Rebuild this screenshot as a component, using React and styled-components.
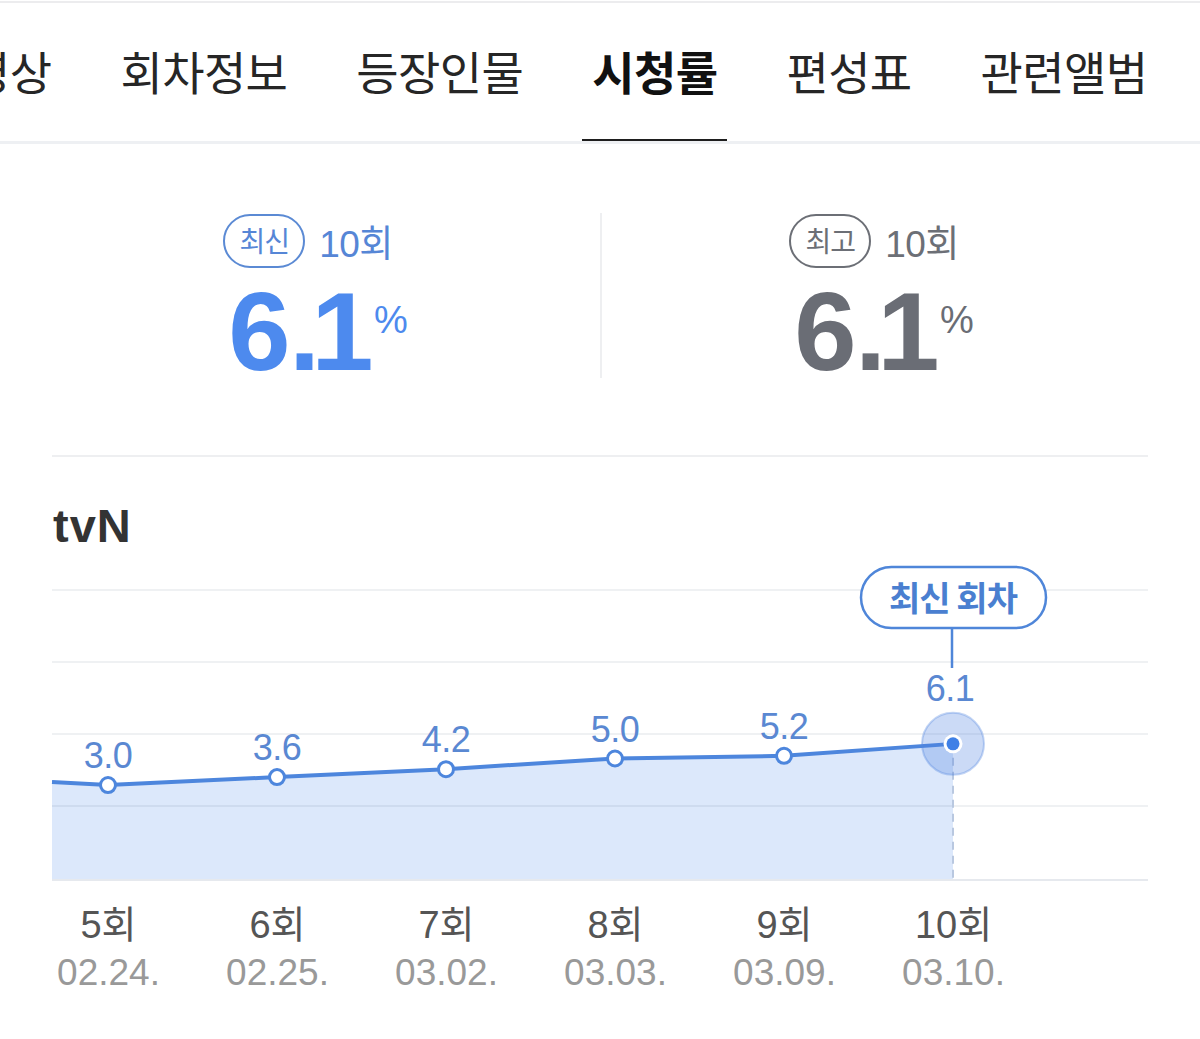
import React from 'react';
import styled, { createGlobalStyle } from 'styled-components';

const Global = createGlobalStyle`
  html, body {
    margin: 0;
    padding: 0;
    background: #fff;
  }
  body {
    font-family: "Liberation Sans", "Noto Sans CJK KR", sans-serif;
    color: #222;
  }
`;

const Page = styled.div`
  width: 1200px;
  height: 1039px;
  overflow: hidden;
  background: #fff;
`;

const TabBar = styled.nav`
  height: 138px;
  margin-top: 1px;
  border-top: 2px solid #ececee;
  border-bottom: 3px solid #eef0f3;
  overflow: hidden;
`;

const TabRow = styled.ul`
  display: flex;
  gap: 49px;
  height: 100%;
  margin: 0 0 0 -42px;
  padding: 0;
  list-style: none;
`;

const Tab = styled.li`
  position: relative;
  display: flex;
  align-items: center;
  padding: 0 10px 4px;
  flex-shrink: 0;
  font-family: "Noto Sans CJK KR", sans-serif;
  font-size: 46px;
  letter-spacing: -0.6px;
  font-weight: ${p => (p.$active ? 700 : 400)};
  color: ${p => (p.$active ? '#111' : '#262626')};
  &::after {
    content: '';
    display: ${p => (p.$active ? 'block' : 'none')};
    position: absolute;
    left: 0;
    right: 0;
    bottom: -1px;
    height: 3px;
    background: #1e1e1e;
  }
`;

const Stats = styled.section`
  display: grid;
  grid-template-columns: 584px 2px 1fr;
  padding: 69px 54px 0 16px;
`;

const StatCol = styled.div`
  display: flex;
  flex-direction: column;
  align-items: center;
  padding-top: 1px;
`;

const Divider = styled.div`
  width: 2px;
  height: 165px;
  background: #eeeff1;
`;

const BadgeRow = styled.div`
  display: flex;
  align-items: center;
  gap: 14px;
`;

const tone = {
  blue: { line: '#5b8ad4', text: '#5686d6', big: '#4d8aee' },
  gray: { line: '#6c6f76', text: '#6c6f76', big: '#6a6d75' },
};

const Badge = styled.span`
  box-sizing: border-box;
  display: inline-flex;
  align-items: center;
  justify-content: center;
  width: 82px;
  height: 54px;
  border: 2px solid ${p => tone[p.$tone].line};
  border-radius: 27px;
  font-family: "Noto Sans CJK KR", sans-serif;
  font-size: 28px;
  letter-spacing: -1px;
  color: ${p => tone[p.$tone].text};
  padding-bottom: 2px;
`;

const Ep = styled.span`
  font-size: 37px;
  letter-spacing: -0.5px;
  color: ${p => tone[p.$tone].text};
`;

const BigRow = styled.div`
  display: flex;
  align-items: flex-start;
  margin-top: 8px;
  padding-left: 20px;
  color: ${p => tone[p.$tone].big};
`;

const BigNum = styled.span`
  font-size: 112px;
  line-height: 1;
  font-weight: 700;
  letter-spacing: -1.5px;
`;

const Dot = styled.span`
  letter-spacing: -9px;
`;

const Pct = styled.span`
  font-size: 38px;
  line-height: 1;
  margin: 25px 0 0 2px;
`;

const ChartSection = styled.section`
  padding: 0 52px;
`;

const Rule = styled.div`
  height: 2px;
  margin-top: 67px;
  background: #eeeff1;
`;

const Channel = styled.h2`
  margin: 45px 0 0 1px;
  font-size: 47px;
  line-height: 1;
  font-weight: 700;
  letter-spacing: 1px;
  color: #333;
`;

const ChartSvg = styled.svg`
  display: block;
  margin-top: 12px;
  overflow: visible;
`;

const Axis = styled.div`
  display: grid;
  grid-template-columns: repeat(6, 169px);
  margin: 19px 0 0 -28px;
`;

const Tick = styled.div`
  display: flex;
  flex-direction: column;
  align-items: center;
  line-height: 1.25;
`;

const TickEp = styled.span`
  font-size: 38px;
  color: #555;
`;

const TickDate = styled.span`
  font-size: 37px;
  color: #999;
`;

const tabs = ['영상', '회차정보', '등장인물', '시청률', '편성표', '관련앨범'];

const episodes = [
  { ep: '5회', date: '02.24.', v: 3.0 },
  { ep: '6회', date: '02.25.', v: 3.6 },
  { ep: '7회', date: '03.02.', v: 4.2 },
  { ep: '8회', date: '03.03.', v: 5.0 },
  { ep: '9회', date: '03.09.', v: 5.2 },
  { ep: '10회', date: '03.10.', v: 6.1 },
];

const BLUE = '#4d86dd';
const px = i => 108 + i * 169;
const py = v => 824 - v * 13.3;

function Chart() {
  const pts = episodes.map((e, i) => [px(i), py(e.v)]);
  const line = [[52, 781], ...pts].map(p => p.join(',')).join(' ');
  const area = `M52,878 L${line.replace(/ /g, ' L')} L953,878 Z`;
  const last = pts[pts.length - 1];

  return (
    <ChartSvg width="1096" height="322" viewBox="52 560 1096 322">
      <path d={area} fill="#dce8fb" />
      {[589, 661, 733, 805].map(y => (
        <line key={y} x1="52" x2="1148" y1={y} y2={y} stroke="rgba(30,50,90,0.07)" strokeWidth="2" />
      ))}
      <line x1="52" x2="1148" y1="879" y2="879" stroke="#e6e9ee" strokeWidth="2" />
      <line x1={last[0]} x2={last[0]} y1={last[1]} y2="878" stroke="#b9c8e0" strokeWidth="2" strokeDasharray="8 6" />
      <polyline points={line} fill="none" stroke={BLUE} strokeWidth="4" strokeLinejoin="round" />
      {pts.slice(0, -1).map(([x, y], i) => (
        <g key={i}>
          <circle cx={x} cy={y} r="7.5" fill="#fff" stroke={BLUE} strokeWidth="3" />
          <text x={x} y={y - 17} textAnchor="middle" fontSize="36" fill="#5a88d2"
            fontFamily='"Liberation Sans", sans-serif' letterSpacing="-0.5">
            {episodes[i].v.toFixed(1)}
          </text>
        </g>
      ))}
      <circle cx={last[0]} cy={last[1]} r="31" fill="rgba(84,134,224,0.3)" stroke="rgba(84,134,224,0.35)" strokeWidth="2" />
      <circle cx={last[0]} cy={last[1]} r="9.5" fill="#fff" />
      <circle cx={last[0]} cy={last[1]} r="6.5" fill="#3f80e6" />
      <text x={last[0] - 3} y="700" textAnchor="middle" fontSize="36" fill="#5a88d2"
        fontFamily='"Liberation Sans", sans-serif' letterSpacing="-0.5">6.1</text>
      <line x1="952" x2="952" y1="627" y2="667" stroke="#4f86d9" strokeWidth="2.5" />
      <rect x="861" y="566" width="185" height="61" rx="30.5" fill="#fff" stroke="#4f86d9" strokeWidth="2.5" />
      <text x="953" y="610" textAnchor="middle" fontSize="34" fontWeight="700" fill="#4a7fd0"
        fontFamily='"Noto Sans CJK KR", sans-serif' letterSpacing="-1">최신 회차</text>
    </ChartSvg>
  );
}

function Stat({ $tone, label }) {
  return (
    <StatCol>
      <BadgeRow>
        <Badge $tone={$tone}>{label}</Badge>
        <Ep $tone={$tone}>10회</Ep>
      </BadgeRow>
      <BigRow $tone={$tone}>
        <BigNum>6<Dot>.</Dot>1</BigNum>
        <Pct>%</Pct>
      </BigRow>
    </StatCol>
  );
}

export default function App() {
  return (
    <Page>
      <Global />
      <TabBar>
        <TabRow>
          {tabs.map(t => (
            <Tab key={t} $active={t === '시청률'}>{t}</Tab>
          ))}
        </TabRow>
      </TabBar>
      <Stats>
        <Stat $tone="blue" label="최신" />
        <Divider />
        <Stat $tone="gray" label="최고" />
      </Stats>
      <ChartSection>
        <Rule />
        <Channel>tvN</Channel>
        <Chart />
        <Axis>
          {episodes.map(e => (
            <Tick key={e.ep}>
              <TickEp>{e.ep}</TickEp>
              <TickDate>{e.date}</TickDate>
            </Tick>
          ))}
        </Axis>
      </ChartSection>
    </Page>
  );
}
